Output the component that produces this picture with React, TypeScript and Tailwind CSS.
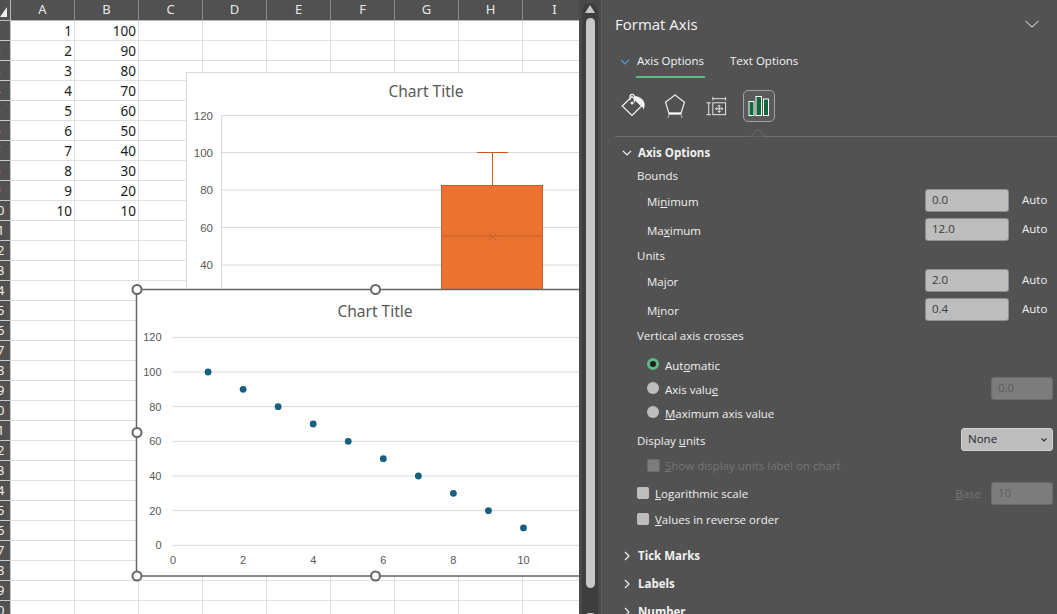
import React from "react";

const COLUMNS = ["A", "B", "C", "D", "E", "F", "G", "H", "I"];
const ROWS = Array.from({ length: 30 }, (_, i) => i + 1);
const POINTS = [100, 90, 80, 70, 60, 50, 40, 30, 20, 10];

function Sheet() {
  return (
    <div className="relative w-[579px] h-full shrink-0 overflow-hidden bg-white font-['Noto_Sans',sans-serif]">
      <div className="flex h-[21px] bg-[#515151] border-b border-[#b5b5b5]">
        <div className="w-[11px] shrink-0 border-r border-[#b5b5b5]">
          <svg width="10" height="20" viewBox="0 0 10 20">
            <polygon points="7,7 7,17 0,17" fill="#f2f2f2" />
          </svg>
        </div>
        {COLUMNS.map((c) => (
          <div
            key={c}
            className="w-[64px] shrink-0 border-r border-[#8a8a8a] flex items-center justify-center text-[13px] text-[#e8e8e8]"
          >
            {c}
          </div>
        ))}
      </div>
      {ROWS.map((r) => (
        <div key={r} className="flex h-[20px]">
          <div className="w-[11px] shrink-0 overflow-hidden bg-[#515151] border-b border-r border-[#c8c8c8]">
            <div
              className={
                r < 10
                  ? "w-[24px] -ml-[15px] text-center text-[13px] leading-[19px] text-[#f4a66a]"
                  : "w-[24px] -ml-[15px] text-center text-[13px] leading-[19px] text-[#f3ece4]"
              }
            >
              {r}
            </div>
          </div>
          {COLUMNS.map((c) => (
            <div
              key={c}
              className="w-[64px] shrink-0 border-r border-b border-[#e0e0e0] pr-[2px] text-right text-[13.5px] leading-[21px] text-[#1a1a1a]"
            >
              {r <= 10 && c === "A" ? r : null}
              {r <= 10 && c === "B" ? POINTS[r - 1] : null}
            </div>
          ))}
        </div>
      ))}
      <BoxChart />
      <ScatterChart />
    </div>
  );
}

function BoxChart() {
  const ticks = [
    [120, 115.5],
    [100, 152.5],
    [80, 190],
    [60, 227.5],
    [40, 265],
  ];
  return (
    <svg className="absolute left-[186px] top-[72px]" width="393" height="218" viewBox="186 72 393 218">
      <rect x="186.5" y="72.5" width="400" height="220" fill="#fff" stroke="#d9d9d9" />
      <text x="426" y="97" textAnchor="middle" fontSize="15.5" fill="#595959" fontFamily="Noto Sans">
        Chart Title
      </text>
      <line x1="221.5" y1="115" x2="221.5" y2="290" stroke="#d9d9d9" />
      {ticks.map(([label, y]) => (
        <g key={label}>
          <line x1="222" y1={y} x2="579" y2={y} stroke="#d9d9d9" />
          <text x="213" y={y + 4} textAnchor="end" fontSize="11.5" fill="#595959" fontFamily="Liberation Sans">
            {label}
          </text>
        </g>
      ))}
      <line x1="477" y1="152.5" x2="508" y2="152.5" stroke="#c55a1e" />
      <line x1="492.5" y1="152.5" x2="492.5" y2="185" stroke="#c55a1e" />
      <rect x="441.5" y="185.5" width="101" height="110" fill="#eb7230" stroke="#c5602a" />
      <line x1="442" y1="236" x2="542" y2="236" stroke="#c5602a" />
      <path d="M488.5 232.5l8 8M496.5 232.5l-8 8" stroke="#c5602a" fill="none" />
    </svg>
  );
}

function ScatterChart() {
  const yTicks = [120, 100, 80, 60, 40, 20, 0];
  const xTicks = [0, 2, 4, 6, 8, 10];
  const yOf = (v: number) => 545.3 - v * 1.733;
  const xOf = (v: number) => 173 + v * 35.05;
  const handles = [
    [137, 289.5],
    [375.5, 289.5],
    [137, 432.5],
    [137, 576],
    [375.5, 576],
  ];
  return (
    <svg className="absolute left-[128px] top-[280px]" width="451" height="305" viewBox="128 280 451 305">
      <path d="M600 289.5H136.5V576H600" fill="#fff" stroke="#666" strokeWidth="1.5" />
      <text x="375" y="317" textAnchor="middle" fontSize="15.5" fill="#595959" fontFamily="Noto Sans">
        Chart Title
      </text>
      {yTicks.map((v) => (
        <g key={v}>
          <line x1="172.5" y1={yOf(v)} x2="579" y2={yOf(v)} stroke="#d9d9d9" />
          <text
            x="161.5"
            y={yOf(v) + 4}
            textAnchor="end"
            fontSize="11"
            fill="#595959"
            fontFamily="Liberation Sans"
          >
            {v}
          </text>
        </g>
      ))}
      {xTicks.map((v) => (
        <text
          key={v}
          x={xOf(v)}
          y="564"
          textAnchor="middle"
          fontSize="11"
          fill="#595959"
          fontFamily="Liberation Sans"
        >
          {v}
        </text>
      ))}
      {POINTS.map((v, i) => (
        <circle key={i} cx={xOf(i + 1)} cy={yOf(v)} r="3.4" fill="#156082" />
      ))}
      {handles.map(([x, y]) => (
        <circle key={`${x}-${y}`} cx={x} cy={y} r="4.5" fill="#fff" stroke="#666" strokeWidth="2" />
      ))}
    </svg>
  );
}

function Scrollbar() {
  return (
    <div className="w-[23px] h-full shrink-0 bg-[#4a4a4a] pl-[3px] pr-[3px] pt-[3px] border-r border-[#5e5e5e]">
      <div className="h-[700px] w-[16px] bg-[#3e3e3e] rounded-t-[8px] flex flex-col items-center">
        <svg className="mt-[2px]" width="10" height="9" viewBox="0 0 10 9">
          <polygon points="5,0 10,8 0,8" fill="#c8c8c8" />
        </svg>
        <div className="mt-[4px] w-[9px] h-[570px] rounded-full bg-[#c8c8c8]" />
        <div className="mt-[25px] w-[9px] h-[20px] rounded-t-[3px] bg-[#c8c8c8]" />
      </div>
    </div>
  );
}

function BucketIcon() {
  return (
    <svg width="26" height="26" viewBox="0 0 26 26" fill="none">
      <path d="M11 3.5L1.2 13 11 22.5 20.6 13 11 3.5Z" stroke="#f2f2f2" strokeWidth="1.2" />
      <path d="M9 7V3.5a2.2 2.2 0 0 1 4.4 0V9.5" stroke="#f2f2f2" strokeWidth="1.2" />
      <circle cx="11" cy="10" r="1.5" fill="#f2f2f2" />
      <path d="M14 3c4 .5 9 3 9.6 8 .2 2-.3 4-1 5.5-.6-2-1.3-3-2.5-3.8L14 6V3Z" fill="#f2f2f2" />
    </svg>
  );
}

function PentagonIcon() {
  return (
    <svg width="24" height="26" viewBox="0 0 24 26" fill="none">
      <path d="M12 2L21.5 9.3 18 20.5H6L2.5 9.3 12 2Z" stroke="#ececec" strokeWidth="1.2" />
      <path d="M6 20.5H18" stroke="#ffffff" strokeWidth="2.2" />
      <path d="M6 21L5 25M18 21L19 25" stroke="#a8a8a8" strokeWidth="1.2" />
    </svg>
  );
}

function SizeIcon() {
  return (
    <svg width="21" height="22" viewBox="0 0 23 24" fill="none" stroke="#f2f2f2">
      <rect x="7.5" y="8.5" width="14" height="13" strokeWidth="1" />
      <path d="M7.5 4h14M7.5 2v4M21.5 2v4" strokeWidth="1" />
      <path d="M3 8.5v13M.5 8.5h5M.5 21.5h5" strokeWidth="1" />
      <path d="M14.5 11v8M10.5 15h8" strokeWidth="1" />
      <path d="M13 12.5l1.5-1.5 1.5 1.5M13 17.5l1.5 1.5 1.5-1.5M12 13.5L10.5 15l1.5 1.5M17 13.5l1.5 1.5-1.5 1.5" strokeWidth="1" />
    </svg>
  );
}

function BarsIcon() {
  return (
    <svg width="22" height="22" viewBox="0 0 22 22">
      <rect x="1" y="6.5" width="5" height="14" fill="#0e6b3c" stroke="#fff" />
      <rect x="8" y="1.5" width="5.5" height="19" fill="#0e6b3c" stroke="#fff" />
      <rect x="15.5" y="4" width="5" height="16.5" fill="#0e6b3c" stroke="#fff" />
    </svg>
  );
}

function Chevron({ dir = "down", color = "#f0f0f0" }: { dir?: "down" | "right"; color?: string }) {
  return (
    <svg width="10" height="10" viewBox="0 0 10 10" fill="none" stroke={color} strokeWidth="1.2">
      {dir === "down" ? <path d="M1 3l4 4 4-4" /> : <path d="M3 1l4 4-4 4" />}
    </svg>
  );
}

function Field({ value, disabled }: { value: string; disabled?: boolean }) {
  return (
    <div
      className={
        disabled
          ? "w-[62px] h-[23px] -mt-[3px] rounded-[3px] border border-[#6c6c6c] bg-[#7c7c7c] px-[6px] text-[11.5px] leading-[19px] text-[#5c5c5c]"
          : "w-[84px] h-[23px] rounded-[3px] border border-[#8f8f8f] bg-[#bdbdbd] px-[6px] text-[11.5px] leading-[19px] text-[#3a3a3a]"
      }
    >
      {value}
    </div>
  );
}

function BoundRow({ className, label, value }: { className: string; label: React.ReactNode; value: string }) {
  return (
    <div className={`flex items-center h-[23px] pl-[45px] ${className}`}>
      <span className="pt-[3px]">{label}</span>
      <div className="ml-auto">
        <Field value={value} />
      </div>
      <span className="w-[48px] pl-[13px] -mt-[1px]">Auto</span>
    </div>
  );
}

function Radio({ checked }: { checked?: boolean }) {
  return checked ? (
    <div className="w-[12px] h-[12px] -mt-[4px] rounded-full bg-[#1f1f1f] border-[3px] border-[#5dba84] shrink-0" />
  ) : (
    <div className="w-[12px] h-[12px] -mt-[4px] rounded-full bg-[#bdbdbd] shrink-0" />
  );
}

function Section({ label }: { label: string }) {
  return (
    <div className="flex items-center h-[28px] pl-[20px] gap-[6px] font-bold text-[#f2f2f2]">
      <Chevron dir="right" />
      <span>{label}</span>
    </div>
  );
}

function Panel() {
  return (
    <div className="flex-1 h-full overflow-hidden bg-[#525252] text-[11.5px] text-[#f0f0f0] font-['Open_Sans',sans-serif]">
      <div className="flex items-center justify-between h-[48px] pl-[13px] pr-[18px]">
        <span className="pt-[1px] text-[15px] font-medium text-[#f5f5f5]">Format Axis</span>
        <svg width="14" height="8" viewBox="0 0 14 8" fill="none" stroke="#f5f5f5" strokeWidth="1">
          <path d="M.5 1L7 7l6.5-6" />
        </svg>
      </div>
      <div className="flex h-[30px] pl-[18px]">
        <div className="pt-[9px]">
          <Chevron color="#4a9fd8" />
        </div>
        <div className="ml-[6px] h-[30px] w-[69px] border-b-2 border-[#5dba84] whitespace-nowrap text-center leading-[26px] text-[#f5f5f5]">
          Axis Options
        </div>
        <div className="ml-[25px] whitespace-nowrap leading-[26px] text-[#f5f5f5]">Text Options</div>
      </div>
      <div className="flex items-center h-[32px] mt-[12px] pl-[19px]">
        <BucketIcon />
        <div className="ml-[16px]">
          <PentagonIcon />
        </div>
        <div className="ml-[19px]">
          <SizeIcon />
        </div>
        <div className="ml-[16px] w-[32px] h-[32px] rounded-[5px] border border-[#a3a3a3] bg-[#5a5a5a] flex items-center justify-center">
          <BarsIcon />
        </div>
      </div>
      <div className="relative mt-[14px] ml-[13px] h-px bg-[#6e6e6e]">
        <svg className="absolute left-[136px] -top-[8px]" width="14" height="9" viewBox="0 0 14 9" fill="#525252" stroke="#6e6e6e">
          <path d="M0 8.5L7 1l7 7.5" />
        </svg>
      </div>

      <div className="flex items-center h-[24px] mt-[4px] pl-[20px] gap-[8px] font-bold text-[#f2f2f2]">
        <Chevron />
        <span className="-ml-[2px]">Axis Options</span>
      </div>
      <div className="flex items-center h-[22px] pl-[35px]">Bounds</div>
      <BoundRow className="mt-[2px]" label={<>Mi<u>n</u>imum</>} value="0.0" />
      <BoundRow className="mt-[6px]" label={<>Ma<u>x</u>imum</>} value="12.0" />
      <div className="flex items-center h-[22px] mt-[4px] pl-[35px]">Units</div>
      <BoundRow className="mt-[2px]" label={<>Ma<u>j</u>or</>} value="2.0" />
      <BoundRow className="mt-[6px]" label={<>M<u>i</u>nor</>} value="0.4" />
      <div className="flex items-center h-[22px] mt-[4px] pl-[35px]">Vertical axis crosses</div>

      <div className="flex items-center h-[24px] mt-[7px] pl-[45px] gap-[6px]">
        <Radio checked />
        <span>Aut<u>o</u>matic</span>
      </div>
      <div className="flex items-center h-[24px] pl-[45px] pr-[4px] gap-[6px]">
        <Radio />
        <span>Axis valu<u>e</u></span>
        <div className="ml-auto">
          <Field value="0.0" disabled />
        </div>
      </div>
      <div className="flex items-center h-[24px] pl-[45px] gap-[6px]">
        <Radio />
        <span><u>M</u>aximum axis value</span>
      </div>
      <div className="flex items-center h-[23px] mt-[2px] pl-[35px] pr-[4px]">
        <span className="pt-[3px]">Display <u>u</u>nits</span>
        <div className="ml-auto w-[92px] h-[23px] rounded-[3px] border border-[#d0d0d0] bg-[#bdbdbd] pl-[6px] pr-[4px] flex items-center justify-between text-[#262626]">
          <span className="-mt-[2px]">None</span>
          <svg width="8" height="6" viewBox="0 0 8 6" fill="none" stroke="#333" strokeWidth="1.2">
            <path d="M1.5 1.5L4 4l2.5-2.5" />
          </svg>
        </div>
      </div>
      <div className="flex items-center h-[22px] mt-[4px] pl-[45px] gap-[5px] text-[#757575]">
        <div className="w-[13px] h-[13px] -mt-[2px] rounded-[2px] bg-[#7c7c7c] border border-[#6c6c6c]" />
        <span><u>S</u>how display units label on chart</span>
      </div>
      <div className="flex items-center h-[23px] mt-[5px] pl-[35px] pr-[4px] gap-[6px]">
        <div className="w-[12px] h-[12px] -mt-[2px] rounded-[2px] bg-[#bdbdbd]" />
        <span><u>L</u>ogarithmic scale</span>
        <span className="ml-auto text-[#757575]"><u>B</u>ase</span>
        <div className="ml-[4px] pt-[3px]">
          <Field value="10" disabled />
        </div>
      </div>
      <div className="flex items-center h-[22px] mt-[4px] pl-[35px] gap-[6px]">
        <div className="w-[12px] h-[12px] -mt-[2px] rounded-[2px] bg-[#bdbdbd]" />
        <span><u>V</u>alues in reverse order</span>
      </div>
      <div className="mt-[11px]">
        <Section label="Tick Marks" />
        <Section label="Labels" />
        <Section label="Number" />
      </div>
    </div>
  );
}

export default function App() {
  return (
    <div className="flex w-[1057px] h-[614px] overflow-hidden">
      <Sheet />
      <Scrollbar />
      <Panel />
    </div>
  );
}
